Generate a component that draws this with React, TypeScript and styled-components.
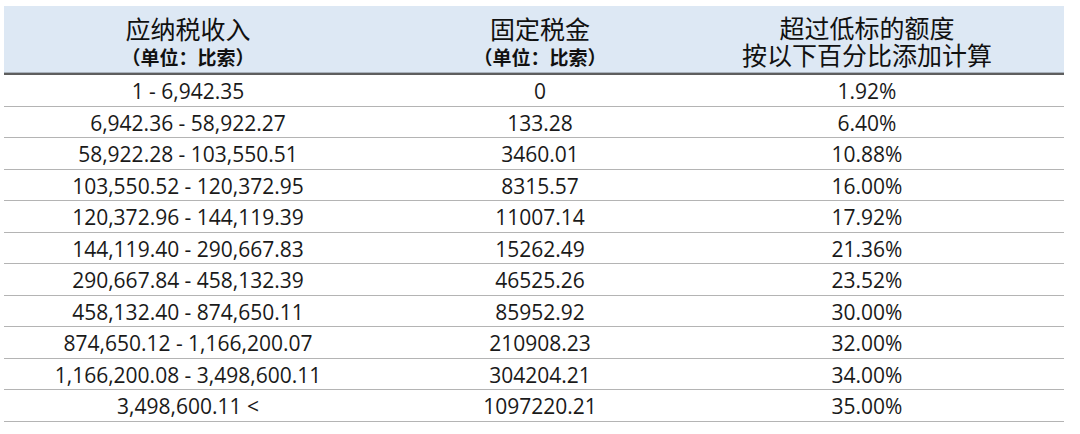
import { createGlobalStyle, styled } from 'styled-components';

const GlobalStyle = createGlobalStyle`
  html, body {
    margin: 0;
    padding: 0;
    background: #ffffff;
  }
  body {
    font-family: "Open Sans", "Noto Sans CJK SC", sans-serif;
    color: #1c1c1c;
  }
`;

const Page = styled.div`
  padding: 6px 0 0 4px;
`;

const Table = styled.div`
  width: 1060px;
`;

const Columns = '368px 336px 1fr';

const HeaderRow = styled.div`
  display: grid;
  grid-template-columns: ${Columns};
  height: 67px;
  background: #dde8f4;
  border-bottom: 2px solid #5e5e5e;
  box-shadow: 0 -1px 0 #a9b2bc inset;
`;

const HeaderCell = styled.div<{ $shift?: number; $top?: number }>`
  display: flex;
  flex-direction: column;
  align-items: center;
  justify-content: flex-start;
  padding-top: ${(p) => p.$top ?? 7}px;
  padding-right: ${(p) => p.$shift ?? 0}px;
  font-family: "Noto Sans CJK SC", sans-serif;
`;

const Title = styled.div<{ $lh?: number }>`
  font-size: 25px;
  line-height: ${(p) => p.$lh ?? 30}px;
  font-weight: 400;
  color: #111;
  text-align: center;
`;

const Subtitle = styled.div`
  font-size: 19px;
  line-height: 28px;
  font-weight: 700;
  color: #111;
`;

const Row = styled.div`
  display: grid;
  grid-template-columns: ${Columns};
  height: 31.5px;
  box-sizing: border-box;
  border-bottom: 1px solid #b4b4b4;
`;

const Cell = styled.div<{ $shift?: number }>`
  display: flex;
  align-items: center;
  justify-content: center;
  padding-top: 2px;
  padding-right: ${(p) => p.$shift ?? 0}px;
  font-size: 21px;
  color: #1a1a1a;
  white-space: nowrap;
`;

const rows: [string, string, string][] = [
  ['1 - 6,942.35', '0', '1.92%'],
  ['6,942.36 - 58,922.27', '133.28', '6.40%'],
  ['58,922.28 - 103,550.51', '3460.01', '10.88%'],
  ['103,550.52 - 120,372.95', '8315.57', '16.00%'],
  ['120,372.96 - 144,119.39', '11007.14', '17.92%'],
  ['144,119.40 - 290,667.83', '15262.49', '21.36%'],
  ['290,667.84 - 458,132.39', '46525.26', '23.52%'],
  ['458,132.40 - 874,650.11', '85952.92', '30.00%'],
  ['874,650.12 - 1,166,200.07', '210908.23', '32.00%'],
  ['1,166,200.08 - 3,498,600.11', '304204.21', '34.00%'],
  ['3,498,600.11 <', '1097220.21', '35.00%'],
];

const App = () => {
  return (
    <>
      <GlobalStyle />
      <Page>
        <Table>
          <HeaderRow>
            <HeaderCell>
              <Title>应纳税收入</Title>
              <Subtitle>（单位：比索）</Subtitle>
            </HeaderCell>
            <HeaderCell>
              <Title>固定税金</Title>
              <Subtitle>（单位：比索）</Subtitle>
            </HeaderCell>
            <HeaderCell $shift={38} $top={7.5}>
              <Title $lh={27}>
                超过低标的额度
                <br />
                按以下百分比添加计算
              </Title>
            </HeaderCell>
          </HeaderRow>
          {rows.map(([income, fixed, rate]) => (
            <Row key={income}>
              <Cell>{income}</Cell>
              <Cell>{fixed}</Cell>
              <Cell $shift={38}>{rate}</Cell>
            </Row>
          ))}
        </Table>
      </Page>
    </>
  );
};

export default App;
